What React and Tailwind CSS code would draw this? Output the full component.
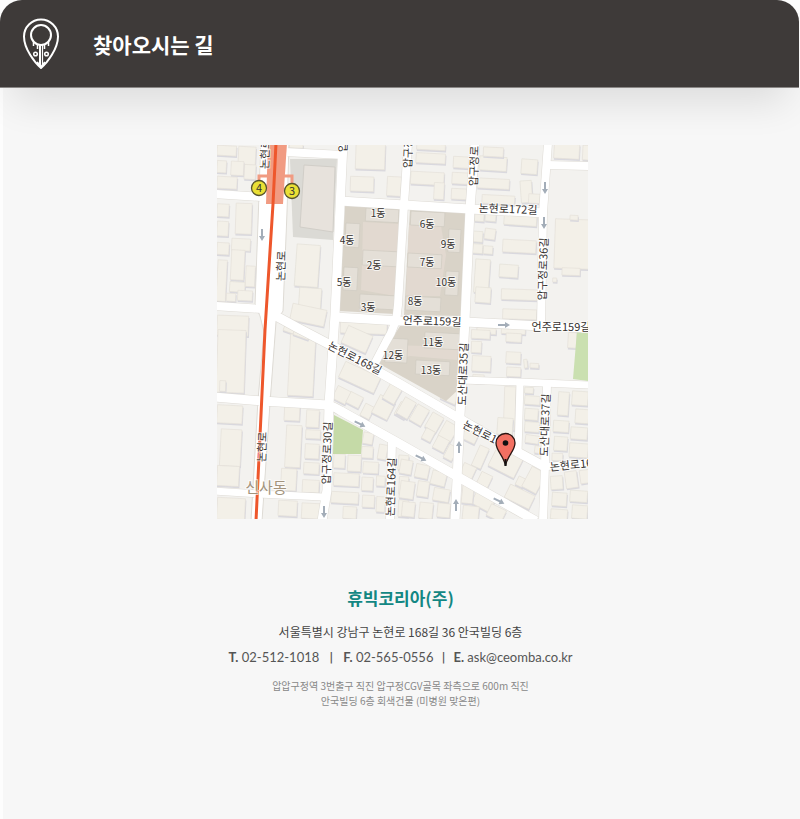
const sans = "font-['Noto_Sans_CJK_KR','Noto_Sans',sans-serif]";

// Each building: x, y, width, height, rotation; drawn at three units per map pixel.
const northWest = [
  [0, 5, 58, 30, 3], [64, 8, 52, 55, 3], [0, 50, 28, 36, 3], [42, 52, 38, 42, 3], [82, 62, 34, 44, 3], [0, 98, 60, 36, 3],
  [0, 180, 36, 38, 3], [56, 178, 48, 92, 2], [0, 232, 34, 44, 3], [44, 284, 56, 36, 3], [0, 296, 36, 36, 3], [42, 318, 40, 90, 3],
  [0, 348, 28, 124, 3], [38, 414, 46, 30, 4], [86, 366, 28, 62, 3], [28, 448, 28, 24, 3], [62, 440, 44, 30, 3],
  [0, 515, 94, 60, 2], [216, 0, 42, 12, 2], [416, 0, 88, 76, 2], [510, 98, 42, 58, 3], [400, 98, 70, 44, 2],
  [236, 302, 70, 126, 4], [246, 432, 66, 66, 4], [222, 488, 104, 50, 12], [370, 535, 140, 34, 2], [200, 548, 60, 22, 20],
];
const northEast = [
  [50, 0, 86, 18, 3], [48, 28, 88, 30, 3], [32, 84, 100, 38, 3], [102, 116, 30, 50, 3], [160, 38, 48, 34, 3], [156, 86, 50, 34, 3],
  [154, 134, 46, 32, 3], [238, 38, 82, 42, 4], [250, 10, 60, 28, 3], [364, 46, 48, 44, 4], [232, 104, 96, 30, 3], [362, 110, 34, 66, -4],
  [246, 154, 98, 26, 3], [386, 150, 34, 28, 3], [462, 0, 76, 44, 3], [548, 4, 22, 44, 3],
  [224, 206, 28, 26, 4], [256, 204, 32, 28, 5], [312, 212, 98, 32, 4], [220, 262, 28, 32, 4], [254, 254, 32, 32, 8],
  [218, 300, 30, 28, 4], [250, 306, 28, 24, 4], [308, 288, 100, 38, 3], [224, 346, 44, 100, 4], [226, 430, 46, 46, 4],
  [298, 362, 56, 38, 4], [304, 436, 108, 32, 2], [308, 496, 102, 30, 2], [464, 226, 106, 148, 2], [486, 372, 54, 22, 2],
  [510, 214, 24, 14, 3], [458, 402, 12, 12, 3], [230, 552, 58, 18, 3], [304, 552, 72, 18, 3],
];
const southWest = [
  [0, 0, 84, 188, 2], [8, 152, 18, 32, 2], [216, 14, 76, 184, 3], [230, 0, 48, 22, 20], [0, 226, 76, 54, 3], [202, 226, 46, 46, 3],
  [268, 240, 38, 52, 3], [10, 298, 62, 110, 3], [206, 286, 46, 126, 3], [266, 300, 44, 26, 3], [264, 342, 42, 44, 3],
  [0, 408, 66, 60, 3], [192, 416, 46, 66, 3], [260, 398, 46, 34, 3], [256, 450, 50, 38, 3], [0, 504, 84, 66, 3],
  [184, 512, 56, 46, 3], [254, 520, 58, 46, 3], [370, 116, 116, 52, 25], [352, 174, 44, 42, 27], [392, 192, 42, 36, 27],
  [436, 224, 30, 40, 27], [474, 202, 52, 60, 27], [510, 150, 40, 68, 30], [540, 220, 34, 42, 30], [380, 0, 80, 56, 24],
  [438, 308, 30, 34, 10], [484, 344, 26, 44, 10], [434, 350, 34, 34, 3], [350, 372, 34, 42, 3], [392, 376, 40, 48, 3],
  [438, 396, 46, 34, 3], [350, 430, 76, 38, 3], [434, 442, 34, 40, 3], [478, 438, 26, 30, 3], [342, 486, 82, 34, 3],
  [436, 496, 36, 36, 3], [478, 500, 26, 46, 3], [378, 530, 40, 36, 3], [544, 376, 30, 44, 5], [546, 440, 28, 52, 3], [544, 510, 30, 50, 3],
];
const southEast = [
  [214, 0, 56, 26, 3], [214, 34, 30, 34, 3], [216, 78, 56, 46, 3], [218, 134, 34, 24, 3], [318, 10, 46, 26, 3], [318, 66, 44, 34, 3],
  [320, 112, 42, 28, 3], [372, 88, 10, 26, -5], [390, 100, 26, 14, 3], [504, 8, 26, 46, 3], [312, 170, 34, 130, 2], [292, 264, 46, 50, 4],
  [0, 206, 38, 56, 30], [38, 228, 40, 54, 30], [84, 252, 38, 50, 30], [124, 278, 42, 52, 30], [126, 178, 48, 38, 24],
  [70, 298, 30, 34, 28], [104, 322, 38, 40, 28], [138, 346, 28, 44, 28], [194, 276, 44, 60, 26], [226, 348, 30, 66, 24],
  [278, 348, 86, 82, 27], [350, 442, 26, 28, 26], [378, 416, 48, 68, 28], [184, 404, 40, 38, 25], [236, 430, 36, 38, 26],
  [318, 478, 82, 44, 26], [222, 480, 62, 56, 28], [186, 466, 34, 54, 6], [188, 528, 48, 42, 6], [264, 530, 50, 38, 26],
  [0, 390, 36, 42, 10], [46, 404, 40, 40, 12], [94, 424, 44, 42, 14], [0, 454, 42, 52, 8], [52, 454, 34, 46, 8],
  [100, 476, 48, 38, 10], [6, 516, 38, 44, 6], [58, 518, 40, 48, 6], [112, 520, 38, 42, 6],
  [374, 172, 26, 18, 4], [374, 198, 46, 26, 4], [374, 236, 40, 34, 4], [374, 276, 44, 30, 4], [376, 316, 40, 24, 8], [404, 348, 22, 22, 8],
  [474, 186, 32, 70, 4], [516, 184, 48, 42, 4], [526, 238, 40, 42, 4], [460, 272, 46, 34, 4], [512, 292, 50, 36, 4],
  [462, 320, 40, 42, 4], [508, 340, 56, 42, 4], [456, 370, 32, 22, 2], [452, 438, 36, 40, -4], [496, 424, 36, 50, -8], [540, 420, 28, 40, -8],
  [456, 488, 44, 40, 4], [510, 482, 52, 34, 4], [452, 538, 50, 30, 4], [516, 526, 46, 40, 4],
];
const quadrants = [
  { origin: "translate(217 144)", buildings: northWest },
  { origin: "translate(400 144)", buildings: northEast },
  { origin: "translate(217 330)", buildings: southWest },
  { origin: "translate(400 330)", buildings: southEast },
];

const apartments = [
  [366, 208, 33, 13], [346, 223, 14, 24], [363, 250, 36, 15], [344, 267, 14, 23], [360, 294, 35, 14],
  [411, 211, 34, 14], [449, 229, 12, 23], [408, 253, 34, 14], [446, 271, 13, 24], [406, 296, 35, 14],
  [425, 332, 36, 16], [386, 338, 22, 24], [416, 360, 34, 14],
];

const roads = [
  ["M215 194L262 197", 8], ["M215 306L262 309", 8], ["M285 152L343 155", 8],
  ["M343 143L338 250L335 315L329 404L327 490L322 521", 9], ["M340 201L405 205L470 209L545 213", 9],
  ["M408 143L404 205L398 305Q397 325 386 342L375 363", 8], ["M475 143L470 209L465 320L460 415L457 480L455 521", 9],
  ["M548 143L543 213L541 326", 8], ["M547 165L590 166", 8], ["M335 317L400 321L465 322L541 326L590 328", 9],
  ["M276 316L296 327L340 350L400 384L460 419L510 448L545 467", 9],
  ["M215 397L262 401L328 405Q335 407 341 411L400 444L460 478L536 521", 9],
  ["M462 380L520 382L590 385", 7], ["M520 382L518 453", 7], ["M547 384L545 465L543 521", 8],
  ["M543 467L590 462", 7], ["M392 441L390 521", 8], ["M215 491L258 494L323 497", 7],
];

const labels = [
  ["1동", 378, 213, 0, 10], ["4동", 347, 240, 0, 10], ["2동", 374, 265, 0, 10], ["5동", 344, 282, 0, 10], ["3동", 368, 307, 0, 10],
  ["6동", 427, 224, 0, 10], ["9동", 448, 244, 0, 10], ["7동", 427, 262, 0, 10], ["10동", 446, 282, 0, 10], ["8동", 415, 301, 0, 10],
  ["11동", 433, 342, 0, 10], ["12동", 393, 355, 0, 10], ["13동", 431, 370, 0, 10],
  ["논현로172길", 508, 209, 2, 11], ["언주로159길", 432, 321, 2, 11], ["언주로159길", 561, 327, 0, 11],
  ["압구정로36길", 543, 269, -88, 11], ["압구정로30길", 327, 453, -88, 11], ["도산대로35길", 463, 374, -88, 11],
  ["도산대로37길", 545, 425, -88, 11], ["논현로164길", 391, 487, -88, 11], ["논현로", 281, 266, -88, 11],
  ["논현로", 262, 447, -88, 11], ["논현로", 265, 154, -88, 11], ["압구정", 408, 153, -88, 11],
  ["압구정로", 474, 166, -88, 11], ["압", 343, 147, -88, 11], ["논현로168길", 355, 358, 27, 11],
  ["논현로1", 480, 432, 27, 11], ["논현로164길", 579, 464, -6, 11],
];

const arrows = [
  [262, 235, 90], [545, 188, 90], [544, 223, 90], [504, 325, 0], [360, 424, 27], [421, 458, 27],
  [499, 501, 27], [459, 447, -90], [456, 505, -90], [324, 512, 90],
];

const stations = [["4", 259, 188], ["3", 292, 191]];

function LocationMap() {
  return (
    <svg viewBox="217 145 371 374" role="img" aria-label="휴빅코리아 약도" className="block w-[371px] max-w-full bg-[#f3f2ef]">
      {quadrants.map(({ origin, buildings }) => (
        <g key={origin} transform={origin}>
          <g transform="scale(.33333)">
            {buildings.map(([x, y, w, h, r], i) => (
              <g key={i} transform={`rotate(${r} ${x + w / 2} ${y + h / 2})`}>
                <rect x={x + 1} y={y + 5} width={w + 2} height={h} fill="#d9d8de" />
                <rect x={x} y={y} width={w} height={h} fill="#f3f0e8" stroke="#e4e0d8" strokeWidth="2" />
              </g>
            ))}
          </g>
        </g>
      ))}
      <path d="M290 159H337L333 240L293 237Z" fill="#dbdad5" />
      <path d="M304 165L335 167L333 232L300 227Z" fill="#e7e2dc" stroke="#d1cec8" />
      <path d="M345 205L401 207L395 314L339 311ZM410 209L466 210L462 316L404 315ZM400 326H462L459 389L446 401L376 362L389 344Z" fill="#d9d3c8" />
      <path d="M363 222L399 224L395 296L361 290L362 264ZM409 225L441 226L446 255L440 296L406 296ZM391 345L424 346L458 350L457 360L410 356L388 361Z" fill="#e2d9d0" />
      {apartments.map(([x, y, w, h]) => (
        <rect key={`${x}-${y}`} x={x} y={y} width={w} height={h} transform={`rotate(3 ${x} ${y})`} fill="#e4dfd7" stroke="#d0cbc1" strokeWidth=".7" />
      ))}
      <path d="M334 415L363 430L361 454H333Z" fill="#c5daa7" />
      <path d="M577 331H588V381L573 379Z" fill="#cae0b0" />
      <path d="M261 143H289L287 212L283 311L276 322L270 403L262 521H251L258 400L264 332L260 316L255 305L259 195Z" fill="#fff" stroke="#dedbd5" />
      <g fill="none" strokeLinejoin="round">
        {roads.map(([d, w]) => <path key={d} d={d} stroke="#dedbd5" strokeWidth={w + 1} />)}
        {roads.map(([d, w]) => <path key={d} d={d} stroke="#fff" strokeWidth={w} />)}
      </g>
      <path d="M261 143H288L286 212L282 311L275 322L269 403L261 521H253L259 400L265 332L261 316L256 305L260 195Z" fill="#fff" />
      <path d="M268 143H287L283 204H266Z" fill="#f19b82" />
      <path d="M259 183V176H292V186" fill="none" stroke="#f19b82" strokeWidth="3" />
      <path d="M276 143L273 204L265 330L256 521" fill="none" stroke="#ee572c" strokeWidth="3" />
      {arrows.map(([x, y, r]) => (
        <path key={`${x}-${y}`} d="M-6 -1H1V-3L6 0L1 3V1H-6Z" transform={`translate(${x} ${y}) rotate(${r})`} fill="#a3adb8" />
      ))}
      <g textAnchor="middle" fill="#35312f" stroke="#fff" strokeOpacity=".7" strokeWidth="2" paintOrder="stroke">
        {labels.map(([text, x, y, r, size]) => (
          <text key={`${x}-${y}`} transform={`translate(${x} ${y}) rotate(${r})`} y="4" fontSize={size}>{text}</text>
        ))}
        <text x="266" y="493" fontSize="15" fill="#a3947c">신사동</text>
      </g>
      {stations.map(([n, x, y]) => (
        <g key={n}>
          <circle cx={x} cy={y} r="7.5" fill="#eae035" stroke="#57532c" strokeWidth="1.3" />
          <text x={x} y={y + 4} textAnchor="middle" fontSize="11" fill="#333">{n}</text>
        </g>
      ))}
      <path d="M505.500 466C504 456 496 451 496 443A9.500 9.500 0 0 1 515 443C515 451 507 456 505.500 466Z" fill="#f27062" stroke="#2b1512" strokeWidth="1.300" />
      <path d="M505.500 459V466" stroke="#111" strokeWidth="2" />
      <circle cx="505.500" cy="443" r="2.800" fill="#111" />
    </svg>
  );
}

function PinIcon() {
  return (
    <svg viewBox="0 0 36 51" aria-hidden="true" className="h-[51px] w-9 shrink-0" fill="none" stroke="#fff" strokeWidth="2">
      <path d="M18 50C12 45 1 31 1 18.500A17 17 0 0 1 35 18.500C35 31 24 45 18 50Z" />
      <circle cx="18" cy="17" r="10" />
      <path d="M17 27V49" />
      <path d="M19.500 27V48" strokeWidth="1.200" />
      <path d="M10.500 23V28M14.500 26V31M21.500 26V31M25.500 23V28" strokeWidth="1.500" />
      <circle cx="12.500" cy="36" r="1.800" strokeWidth="1.500" />
      <circle cx="23.500" cy="36" r="1.800" strokeWidth="1.500" />
      <path d="M14 44L18 49L22 44" />
    </svg>
  );
}

export default function App() {
  return (
    <div className={`flex min-h-screen flex-col overflow-hidden bg-[#fdfdfd] ${sans}`}>
      <header className="relative z-10 mr-px flex h-[88px] items-center gap-[34px] rounded-t-[22px] border-b border-[#8a8786] bg-[#3e3a39] pl-[23px] shadow-[0_26px_38px_-12px_rgba(0,0,0,0.11)]">
        <PinIcon />
        <h1 className="text-[21px] leading-8 font-bold text-white">찾아오시는 길</h1>
      </header>
      <main className="ml-[3px] flex grow flex-col items-center bg-[#f7f7f7] pt-[57px] pr-4 pb-12 pl-[18px]">
        <LocationMap />
        <address className="mt-[65px] pr-1 text-center not-italic text-[#555]">
          <h2 className="text-[17px] leading-7 font-bold text-[#138783]">휴빅코리아(주)</h2>
          <p className="mt-2 text-[12px] leading-6 text-[#444]">서울특별시 강남구 논현로 168길 36 안국빌딩 6층</p>
          <p className="flex flex-wrap justify-center font-['Lato','Noto_Sans_CJK_KR',sans-serif] text-[13px] leading-[26px]">
            <span><b className="font-bold">T.</b> <a href="tel:02-512-1018">02-512-1018</a></span>
            <span className="mx-1.5">ㅣ</span>
            <span><b className="font-bold">F.</b> 02-565-0556</span>
            <span className="mx-1">ㅣ</span>
            <span><b className="font-bold">E.</b> <a href="mailto:ask@ceomba.co.kr">ask@ceomba.co.kr</a></span>
          </p>
          <p className="mt-2 text-[10px] leading-[15px] text-[#888]">
            압압구정역 3번출구 직진 압구정CGV골목 좌측으로 600m 직진<br />
            안국빌딩 6층 회색건물 (미병원 맞은편)
          </p>
        </address>
      </main>
    </div>
  );
}
